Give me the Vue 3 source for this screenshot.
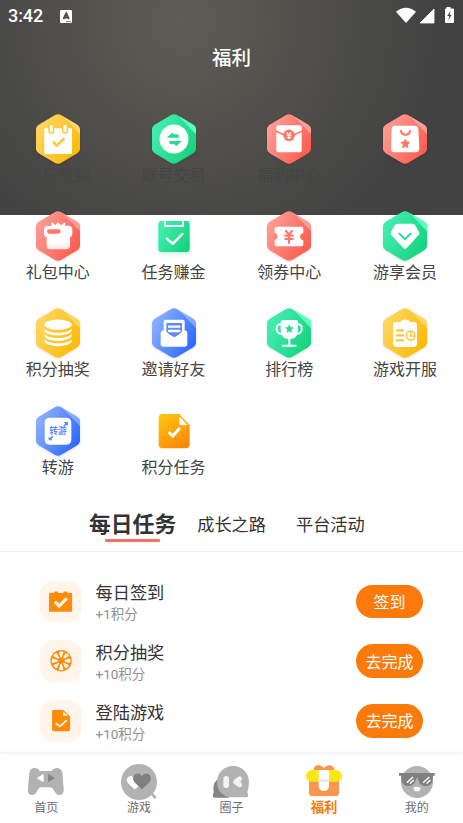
<script setup>
import { ref } from 'vue'

const services = [
  { label: '每日签到', tone: 'yellow', icon: 'calendar' },
  { label: '账号交易', tone: 'green', icon: 'exchange' },
  { label: '福利中心', tone: 'red', icon: 'envelope' },
  { label: '积分商城', tone: 'red', icon: 'bag' },
  { label: '礼包中心', tone: 'red', icon: 'gift' },
  { label: '任务赚金', tone: '', icon: 'checklist' },
  { label: '领券中心', tone: 'red', icon: 'ticket' },
  { label: '游享会员', tone: 'green', icon: 'gem' },
  { label: '积分抽奖', tone: 'yellow', icon: 'coins' },
  { label: '邀请好友', tone: 'blue', icon: 'mail' },
  { label: '排行榜', tone: 'green', icon: 'trophy' },
  { label: '游戏开服', tone: 'yellow', icon: 'schedule' },
  { label: '转游', tone: 'blue', icon: 'transfer' },
  { label: '积分任务', tone: '', icon: 'document' },
]
const tabs = ['每日任务', '成长之路', '平台活动']
const activeTab = ref(0)
const tasks = [
  { title: '每日签到', points: '+1积分', action: '签到', icon: 'calendar' },
  { title: '积分抽奖', points: '+10积分', action: '去完成', icon: 'wheel' },
  { title: '登陆游戏', points: '+10积分', action: '去完成', icon: 'file' },
]
const navItems = [
  { label: '首页', icon: 'pad' },
  { label: '游戏', icon: 'heart' },
  { label: '圈子', icon: 'chat' },
  { label: '福利', icon: 'gift', active: true },
  { label: '我的', icon: 'face' },
]
const spokes = [0, 45, 90, 135, 180, 225, 270, 315]
</script>

<template>
  <div class="page">
    <svg class="defs" width="0" height="0">
      <defs>
        <linearGradient id="g-yellow" x1="0" y1="0.2" x2="1" y2="0.8"><stop offset="0" stop-color="#fed766" /><stop offset="1" stop-color="#fdb900" /></linearGradient>
        <linearGradient id="g-green" x1="0" y1="0.2" x2="1" y2="0.8"><stop offset="0" stop-color="#45efb4" /><stop offset="1" stop-color="#14d27b" /></linearGradient>
        <linearGradient id="g-red" x1="0" y1="0.2" x2="1" y2="0.8"><stop offset="0" stop-color="#ff9f98" /><stop offset="1" stop-color="#fe594a" /></linearGradient>
        <linearGradient id="g-blue" x1="0" y1="0.2" x2="1" y2="0.8"><stop offset="0" stop-color="#92b4ff" /><stop offset="1" stop-color="#2665ff" /></linearGradient>
        <linearGradient id="g-doc" x1="0.2" y1="0" x2="0.8" y2="1"><stop offset="0" stop-color="#fec310" /><stop offset="1" stop-color="#fc8607" /></linearGradient>
        <linearGradient id="g-fade" x1="0" y1="0" x2="0" y2="1"><stop offset="0.75" stop-color="#fff" /><stop offset="1" stop-color="#fff" stop-opacity="0.8" /></linearGradient>
      </defs>
    </svg>

    <header class="status">
      <span class="time">3:42</span>
      <svg class="app-badge" viewBox="0 0 12 13"><rect width="12" height="13" rx="1.2" fill="#fff" /><path d="M3.5 9 6.2 3.500l2.700 5.500M4.400 7.500H8" stroke="#4c4b47" stroke-width="1.900" fill="none" /><path d="M6 11.6h5" stroke="#4c4b47" stroke-width=".7" /></svg>
      <svg class="signals" viewBox="0 0 58 17">
        <path d="M0 4.8Q10-3.4 20 4.8L10 16Z" fill="#fff" />
        <path d="M24 16 38 2V16Z" fill="#fff" stroke="#fff" stroke-width=".8" stroke-linejoin="round" />
        <path d="M50.5 0h4v1.5H57q1 0 1 1V15q0 1-1 1h-7q-1 0-1-1V2.500q0-1 1-1h.5Z" fill="#fff" />
        <path d="m54.500 4-3.300 5h2l-.8 4 3.400-5.200h-2Z" fill="#4a4945" />
      </svg>
    </header>
    <h1 class="heading">福利</h1>

    <section class="services">
      <div v-for="s in services" :key="s.label" class="service">
        <svg class="service-icon" :class="s.tone" viewBox="-90 -75 180 150">
          <template v-if="s.tone">
            <path class="hex" d="M-10-71Q0-77 10-71L58-43Q66-38 66-30V30Q66 38 58 43L10 71Q0 77-10 71L-58 43Q-66 38-66 30V-30Q-66-38-58-43Z" :fill="`url(#g-${s.tone})`" />
            <path class="shine" d="M14-69 58-43Q66-38 66-30V-14Z" />
          </template>

          <g v-if="s.icon === 'calendar'">
            <rect x="-41" y="-32" width="83" height="77" rx="2" fill="#fff" />
            <g fill="#fff" stroke="#fec83a" stroke-width="4.500"><rect x="-27" y="-45" width="14" height="27" rx="7" /><rect x="14" y="-45" width="14" height="27" rx="7" /></g>
            <path class="line tone" stroke-width="7.500" d="M-13 10-4 20 17 0" />
          </g>
          <g v-else-if="s.icon === 'exchange'">
            <circle r="43.500" fill="#fff" />
            <path class="solid" d="M-22-4-6-18Q-2-21-2-14H10Q14-14 14-10V-4ZM24 6 8 20Q3 24 3 16H-10Q-14 16-14 11V6Z" />
          </g>
          <g v-else-if="s.icon === 'envelope'">
            <rect x="-38" y="-41" width="76" height="81" rx="6" fill="#fff" />
            <path class="line tone" stroke-width="5" d="M-38-23-15-13M38-23 15-13" />
            <circle class="solid" cy="-11" r="17.500" />
            <text x="0" y="-1" font-size="28" fill="#fff">¥</text>
          </g>
          <g v-else-if="s.icon === 'bag'">
            <path d="M-30-40H30Q39-40 40-31L43 27Q44 39 32 40H-32Q-43 39-42 27L-40-31Q-39-40-30-40Z" fill="#fff" />
            <path class="line tone" stroke-width="6" d="M-12-25C-11-9 14-9 15-25" />
            <path class="solid tone" stroke-width="3" stroke-linejoin="round" d="m1 1 4 8 9 1-7 7 2 9-8-4-8 4 2-9-7-7 9-1Z" />
          </g>
          <g v-else-if="s.icon === 'gift'">
            <path d="M-20-30V-37Q-20-43-15-39L-8-32 0-41 9-32 18-39Q22-42 22-37L21-31H31Q43-31 43-18V-10Q43 1 36 4V28Q36 40 24 40H-23Q-34 40-34 28V4Q-42 1-42-10V-18Q-42-30-31-30Z" fill="url(#g-fade)" />
            <rect class="solid" x="-33" y="-20" width="41" height="13" rx="6.500" />
          </g>
          <g v-else-if="s.icon === 'checklist'" class="lifted">
            <rect x="-47" y="-45" width="94" height="93" rx="9" fill="url(#g-green)" />
            <path class="line" stroke="#fff" stroke-width="5.500" d="M-27-43V-30H27V-43" />
            <path class="line" stroke="#fff" stroke-width="7.500" d="M-21 8-3 23 25-6" />
          </g>
          <g v-else-if="s.icon === 'ticket'">
            <path d="M-37-28H37Q43-28 43-22V-9Q33-6 33 2 33 9 43 13V25Q43 31 37 31H-37Q-43 31-43 25V13Q-34 9-34 2-34-6-43-9V-22Q-43-28-37-28Z" fill="#fff" />
            <path class="line tone" stroke-width="6.500" d="M-9-15 0-4 9-15M-11-1H11M-11 9H11M0-2V21" />
          </g>
          <g v-else-if="s.icon === 'gem'">
            <path d="M-22-37H22Q28-37 31-32L42-12Q45-7 41-3L6 35Q0 42-6 35L-41-3Q-45-7-42-12L-31-32Q-28-37-22-37Z" fill="#fff" />
            <path class="line tone" stroke-width="5.500" d="M-17-7 0 9 17-7" />
          </g>
          <g v-else-if="s.icon === 'coins'" fill="#fff">
            <ellipse cy="-25" rx="41" ry="15.500" />
            <path v-for="y in [-13, 3, 19]" :key="y" :d="`M-41 ${y}C-27 ${y + 16} 27 ${y + 16} 41 ${y}V${y + 6}Q39 ${y + 13} 25 ${y + 17} 0 ${y + 24}-25 ${y + 17}-39 ${y + 13}-41 ${y + 6}Z`" />
          </g>
          <g v-else-if="s.icon === 'mail'">
            <rect x="-31" y="-40" width="63" height="65" rx="6" fill="#fff" />
            <path class="solid" d="M-23-27Q-23-30-20-30H21Q24-30 24-27V-3L9 8Q1 14-7 8L-23-3Z" />
            <path d="M-32-8-16-1V3L-4 11Q1 14 6 11L17 3V-1L33-8Q40-6 40 1V34Q40 41 33 41H-32Q-40 41-40 34V1Q-40-6-32-8Z" fill="#fff" />
            <path class="solid" d="M-22-2H23L7 9Q1 14-6 9Z" />
            <path d="M-15-19H16M-15-6H16" stroke="#fff" stroke-width="7" stroke-linecap="round" />
          </g>
          <g v-else-if="s.icon === 'trophy'">
            <path d="M-19-39H21Q27-39 27-33V-9Q27 18 1 19-25 18-25-9V-33Q-25-39-19-39Z" fill="#fff" />
            <path class="line" stroke="#fff" stroke-width="6" d="M-24-26C-41-31-43 3-22 3M25-26C43-31 43 3 23 3M1 15V36M-19 38H20" />
            <path class="solid tone" stroke-width="2" stroke-linejoin="round" d="m1-24 3 7 8 1-6 6 2 8-7-4-7 4 2-8-6-6 8-1Z" />
          </g>
          <g v-else-if="s.icon === 'schedule'">
            <path d="M-27-33H-14L-9-38Q0-43 10-38L15-33H27Q36-33 36-24V31Q36 42 26 42H-26Q-36 42-36 31V-24Q-36-33-27-33Z" fill="#fff" />
            <path class="line tone" stroke-width="7" d="M-24-8H-6M-24 7H-6M-24 22H-6" />
            <circle class="line tone" cx="17" cy="8" r="13" stroke-width="4.500" /><path class="line tone" stroke-width="4" d="M17 0V9H25" />
          </g>
          <g v-else-if="s.icon === 'transfer'">
            <rect x="-40" y="-40" width="80" height="81" rx="14" fill="#fff" />
            <text class="solid" x="0" y="10" font-size="26">转游</text>
            <path class="solid" d="M17-27H30V-16L26-19 19-13 16-17 22-22ZM-28 17-24 20-17 14-14 18-20 24-16 28H-28Z" />
          </g>
          <g v-else>
            <path d="M-35-51H16L47-17V40Q47 52 35 52H-34Q-46 52-46 40V-39Q-46-51-35-51Z" fill="url(#g-doc)" />
            <path d="M18-41V-19H38Z" fill="#fff" stroke="#fff" stroke-width="3" stroke-linejoin="round" />
            <path class="line" stroke="#fff" stroke-width="9.500" d="M-13 6-4 15 15-6" />
          </g>
        </svg>
        <span class="service-label">{{ s.label }}</span>
      </div>
    </section>

    <nav class="tabs">
      <button v-for="(t, i) in tabs" :key="t" class="tab" :class="{ active: i === activeTab }" @click="activeTab = i">{{ t }}</button>
    </nav>

    <ul class="tasks">
      <li v-for="t in tasks" :key="t.title" class="task">
        <svg class="task-icon" viewBox="0 0 124 124">
          <g v-if="t.icon === 'calendar'">
            <path d="M27 36H42V33Q42 31 45 31H51Q54 31 54 33V36H70V33Q70 31 73 31H79Q82 31 82 33V36H96V92H27Z" fill="#ff8c08" />
            <path class="line sharp" stroke="#fff5ea" stroke-width="9" d="M45 62 57 75 80 52" />
          </g>
          <g v-else-if="t.icon === 'wheel'">
            <circle cx="63" cy="62" r="32" fill="#ff8c08" />
            <path v-for="a in spokes" :key="a" d="M61 52 56 36Q63 31 70 36L65 52Z" :transform="`rotate(${a} 63 62)`" fill="#fff5ea" />
          </g>
          <g v-else>
            <path d="M40 30H70L90 49V88Q90 93 85 93H41Q36 93 36 88V34Q36 30 40 30Z" fill="#ff8c08" />
            <path d="M69 34V47H84Z" fill="#fff5ea" />
            <path class="line sharp" stroke="#fff5ea" stroke-width="5.500" d="M47 69 59 79 80 60" />
          </g>
        </svg>
        <div class="task-text">
          <span class="task-title">{{ t.title }}</span>
          <span class="task-points">{{ t.points }}</span>
        </div>
        <button class="task-action">{{ t.action }}</button>
      </li>
    </ul>

    <footer class="bottom-nav">
      <a v-for="n in navItems" :key="n.label" class="nav-item" :class="{ active: n.active }">
        <svg class="nav-icon" viewBox="-60 -57 120 114">
          <g v-if="n.icon === 'pad'">
            <path d="M-37-45Q-24-46-19-36H17Q23-46 36-45 47-42 49-31L53 17Q55 35 41 36 30 37 24 22 20 13 12 13H-14Q-22 13-25 22-31 37-43 36-57 34-54 17L-50-31Q-48-43-37-45Z" fill="#b2b2b2" />
            <path d="M-28-14-10-26Q-7-27-7-23V-6Q-7-2-10-4Z" fill="#fff" /><path d="M26-14 9-26Q6-27 6-23V-6Q6-2 9-4Z" fill="#868686" />
          </g>
          <g v-else-if="n.icon === 'heart'">
            <circle cx="0" cy="-3" r="54" fill="#b2b2b2" /><path class="line" d="M37 30 48 43" stroke="#b2b2b2" stroke-width="8" />
            <path d="M-13 18-32 0C-44-16-23-27-12-12L-5-8V13Z" fill="#fff" stroke="#fff" stroke-width="3" stroke-linejoin="round" />
            <path d="M9 19-12-1C-29-20-4-40 9-21 22-40 47-20 30-1Z" fill="#808080" />
          </g>
          <g v-else-if="n.icon === 'chat'">
            <path d="M-42-10C-58 6-51 20-52 29-56 35-55 43-50 44H-5Z" fill="#858585" />
            <path d="M6-51C34-51 54-30 54-3 54 14 50 20 49 29Q53 33 51 40 51 43 46 43H5C-25 43-42 23-42-3-42-31-20-51 6-51Z" fill="#b2b2b2" />
            <rect x="-23" y="-21" width="17" height="36" rx="8" fill="#f2f2f2" />
            <path d="M10-10 20-18C31-25 39-12 28-4 38 4 32 17 21 11L9 2Q4-3 10-10Z" fill="#f2f2f2" />
          </g>
          <g v-else-if="n.icon === 'gift'">
            <path d="M-31-34C-33-52-16-62-1-45 14-61 34-52 32-34Z" fill="#fb9650" />
            <path d="M-45-15H45V29Q45 39 35 39H-35Q-45 39-45 29Z" fill="#fb9650" />
            <rect x="-54" y="-39" width="108" height="35" rx="17.500" fill="#fce611" />
            <path d="M-16-39H15V8Q14 24 0 24-15 24-16 8Z" fill="#fff" /><path d="M-16-11H15V-4H-16Z" fill="#e6e6e6" />
          </g>
          <g v-else>
            <circle cy="-3" r="48" fill="#b2b2b2" />
            <path d="M-54-30H53V-22H48C48-4 43 9 26 9 12 9 5-1 3-13Q0-20-2-13C-6 0-11 9-25 9-42 9-48-4-48-22H-54Z" fill="#808080" />
            <path class="line" stroke="#fff" stroke-width="4" d="M-29-2-13-17M-20 1-10-8M20-2 36-17M30 1 39-8" />
            <path d="M-11 14Q0 8 11 14 10 25 0 25-10 25-11 14Z" fill="#fff" />
          </g>
        </svg>
        <span class="nav-label">{{ n.label }}</span>
      </a>
    </footer>
  </div>
</template>

<style>
body { margin: 0; background: #fff; }
</style>

<style scoped>
.page {
  display: flex;
  flex-direction: column;
  width: 463px;
  height: 823px;
  overflow: hidden;
  font-family: Roboto, "Noto Sans CJK SC", sans-serif;
  background: radial-gradient(circle at 183px 22px, #5e5c55 0, #424242 255px) 0 0 / 463px 215px no-repeat, #fff;
}
.defs { position: absolute; }
button { border: 0; padding: 0; background: none; font-family: inherit; color: inherit; }
.line { fill: none; stroke-linecap: round; stroke-linejoin: round; }
.line.sharp { stroke-linecap: butt; stroke-linejoin: miter; }

.status { display: flex; align-items: center; height: 32px; padding: 0 9px 0 8px; color: #fff; }
.time { font-size: 18px; font-weight: 500; line-height: 32px; letter-spacing: -0.1px; }
.app-badge { width: 12px; height: 13px; margin-left: 17px; }
.signals { width: 58px; height: 17px; margin-left: auto; margin-top: -1px; }
.heading { margin: 12px 0 0; height: 30px; line-height: 30px; text-align: center; color: #fff; font-size: 19.500px; font-weight: 500; }

.services { display: grid; grid-template-columns: repeat(4, 1fr); grid-auto-rows: 97.200px; padding-top: 40px; height: 387px; }
.service { display: flex; flex-direction: column; align-items: center; }
.service-icon { width: 60px; height: 50px; overflow: visible; }
.service-label { font-size: 16px; line-height: 22px; margin-top: 1px; color: #444; }
.hex { filter: drop-shadow(0 3px 3px rgba(0, 0, 0, 0.12)); }
.shine { fill: rgba(255, 255, 255, 0.33); }
.service-icon text { font-family: "Noto Sans CJK SC", sans-serif; font-weight: 700; text-anchor: middle; }
.yellow { --tone: #fec636; }
.green { --tone: #27db91; }
.red { --tone: #ff766b; }
.blue { --tone: #5c8cff; }
.green .shine { fill: #5cffc4; }
.solid { fill: var(--tone); }
.tone { stroke: var(--tone); }
.lifted { filter: drop-shadow(0 8px 6px rgba(20, 210, 123, 0.2)); }

.tabs { display: flex; align-items: center; height: 48px; padding: 0 0 2px 89px; border-bottom: 1px solid #f2f2f2; color: #333; }
.tab { position: relative; margin-right: 30px; font-size: 17.200px; line-height: 28px; }
.tab.active { margin-right: 21px; font-size: 21.800px; font-weight: 700; }
.tab.active::after { content: ""; position: absolute; left: 16px; right: 16px; bottom: -3px; height: 3px; border-radius: 1px; background: #ff6e66; }

.tasks { display: flex; flex-direction: column; gap: 18.300px; margin: 0; padding: 28.500px 40px 0; list-style: none; }
.task { display: flex; align-items: center; height: 41.500px; }
.task-icon { width: 41.500px; height: 41.500px; border-radius: 14px; background: #fff5ea; }
.task-text { display: flex; flex-direction: column; margin-left: 14px; padding-top: 3px; }
.task-title { font-size: 17.200px; line-height: 24px; color: #333; }
.task-points { font-size: 13.500px; line-height: 19px; color: #909090; }
.task-action { width: 67px; height: 33.500px; margin-left: auto; padding-bottom: 1px; border-radius: 17px; background: #fb7a09; color: #fff; font-size: 16px; }

.bottom-nav { display: flex; flex: none; height: 69px; margin-top: auto; background: #fff; box-shadow: 0 -1px 3px rgba(0, 0, 0, 0.09); }
.nav-item { display: flex; flex: 1; flex-direction: column; align-items: center; padding-top: 10px; }
.nav-icon { width: 40px; height: 38px; overflow: visible; }
.nav-label { font-size: 12px; line-height: 10px; margin-top: 0.5px; color: #6c6c6c; }
.active .nav-label { font-size: 13.400px; font-weight: 700; color: #fb7a09; }
</style>
